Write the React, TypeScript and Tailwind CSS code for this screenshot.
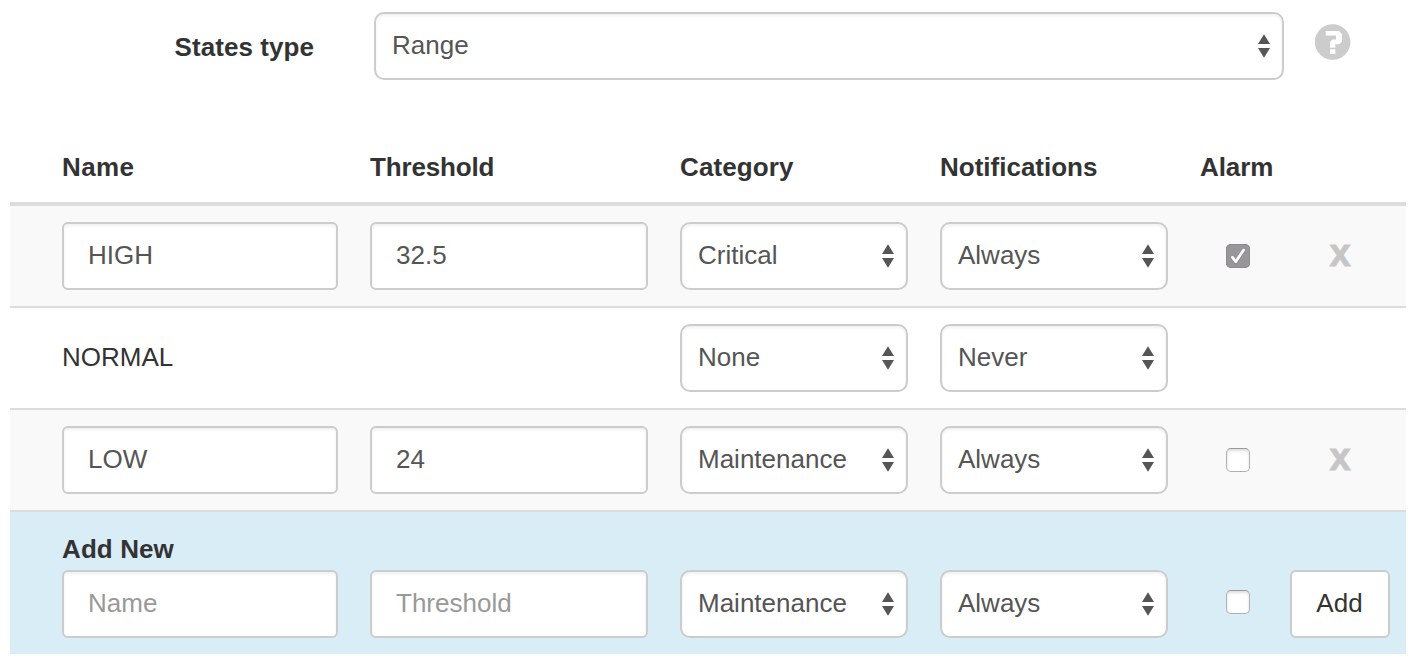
import type { ReactNode } from "react";

const fieldBase =
  "h-[68px] border-2 border-[#ccc] bg-white text-[#555] shadow-[inset_0_2px_3px_rgba(0,0,0,0.06)] outline-none";

function TextField({ value, placeholder, width }: { value?: string; placeholder?: string; width: string }) {
  return (
    <input
      type="text"
      defaultValue={value}
      placeholder={placeholder}
      className={`${fieldBase} ${width} rounded-md pr-6 pb-[2px] pl-6 placeholder:text-[#999]`}
    />
  );
}

function SelectField({ value, width }: { value: string; width: string }) {
  return (
    <button type="button" className={`${fieldBase} ${width} flex items-center justify-between rounded-[10px] pr-[12px] pl-4`}>
      <span className="pb-[2px]">{value}</span>
      <svg width="12" height="24" viewBox="0 0 12 24" fill="#555">
        <path d="M6 0.3 12 10H0zM0 14h12L6 23.7z" />
      </svg>
    </button>
  );
}

function Checkbox({ checked }: { checked?: boolean }) {
  return checked ? (
    <button type="button" role="checkbox" aria-checked="true" className="block size-6 rounded-[5px] bg-[#98969b] shadow-[inset_0_0_0_1px_#8d8b90]">
      <svg width="24" height="24" viewBox="0 0 24 24" fill="none" strokeLinecap="round" strokeLinejoin="round">
        <path d="M6.4 14.4 9.8 18.8 17.5 7.2" stroke="#7d7b80" strokeWidth="2.8" />
        <path d="M6.4 13.4 9.8 17.8 17.5 6.2" stroke="#fff" strokeWidth="2.8" />
      </svg>
    </button>
  ) : (
    <button
      type="button"
      role="checkbox"
      aria-checked="false"
      className="block size-6 rounded-[5px] border border-x-[#b0b0b0] border-t-[#999] border-b-[#b0b0b0] bg-white shadow-[inset_0_2px_3px_rgba(0,0,0,0.13)]"
    />
  );
}

function RemoveButton() {
  return (
    <button type="button" className="w-[100px] text-center text-[38px] leading-10 font-bold text-black opacity-20 [-webkit-text-stroke:1px_#000]">
      <span className="block -translate-y-[3px]">x</span>
    </button>
  );
}

const columns = "grid grid-cols-[308px_310px_260px_260px_90px_100px] pl-[52px]";

function Row({ tone, children }: { tone: string; children: ReactNode }) {
  return <div className={`${columns} ${tone} h-[102px] items-center border-b-2 border-[#ddd]`}>{children}</div>;
}

export default function App() {
  return (
    <div className="h-[664px] w-[1416px] overflow-hidden bg-white px-[10px] pt-3 font-['Liberation_Sans',Arial,sans-serif] text-[26px] leading-[36px] text-[#333]">
      <div className="flex h-[68px]">
        <label className="w-[304px] pt-[17px] text-right font-bold tracking-[0.06px]">States type</label>
        <div className="pl-[60px]">
          <SelectField value="Range" width="w-[910px]" />
        </div>
        <svg className="mt-3 ml-[31px]" width="36" height="36" viewBox="0 0 36 36">
          <circle cx="17.6" cy="18" r="17.8" fill="#ccc" />
          <path d="M10.700 7h13.300l3 3v7.800l-3 2.400h-3.700v3.500h-5.300v-5.700l2.500-2.400h3.500v-4.200H10.700zM15 25.300h5.300V30H15z" fill="#fff" />
        </svg>
      </div>

      <div className={`${columns} h-[126px] items-end border-b-4 border-[#ddd] pb-[17px] font-bold`}>
        <span className="tracking-[0.4px]">Name</span>
        <span className="tracking-[-0.15px]">Threshold</span>
        <span className="tracking-[0.1px]">Category</span>
        <span>Notifications</span>
        <span className="tracking-[-0.1px]">Alarm</span>
        <span />
      </div>

      <Row tone="bg-[#f9f9f9]">
        <TextField value="HIGH" width="w-[276px]" />
        <TextField value="32.5" width="w-[278px]" />
        <SelectField value="Critical" width="w-[228px]" />
        <SelectField value="Always" width="w-[228px]" />
        <div className="pl-[26px]">
          <Checkbox checked />
        </div>
        <RemoveButton />
      </Row>

      <Row tone="bg-white">
        <span className="pb-[2px]">NORMAL</span>
        <span />
        <SelectField value="None" width="w-[228px]" />
        <SelectField value="Never" width="w-[228px]" />
      </Row>

      <Row tone="bg-[#f9f9f9]">
        <TextField value="LOW" width="w-[276px]" />
        <TextField value="24" width="w-[278px]" />
        <SelectField value="Maintenance" width="w-[228px]" />
        <SelectField value="Always" width="w-[228px]" />
        <div className="pl-[26px]">
          <Checkbox />
        </div>
        <RemoveButton />
      </Row>

      <div className="h-[142px] bg-[#d9edf7] pt-[19px]">
        <div className="h-[39px] pl-[52px] font-bold tracking-[0.1px]">Add New</div>
        <div className={columns}>
          <TextField placeholder="Name" width="w-[276px]" />
          <TextField placeholder="Threshold" width="w-[278px]" />
          <SelectField value="Maintenance" width="w-[228px]" />
          <SelectField value="Always" width="w-[228px]" />
          <div className="pt-5 pl-[26px]">
            <Checkbox />
          </div>
          <button type="button" className="h-[68px] w-[100px] rounded-md border-2 border-[#ccc] bg-white pr-[1px] pb-[2px]">
            Add
          </button>
        </div>
      </div>
    </div>
  );
}
